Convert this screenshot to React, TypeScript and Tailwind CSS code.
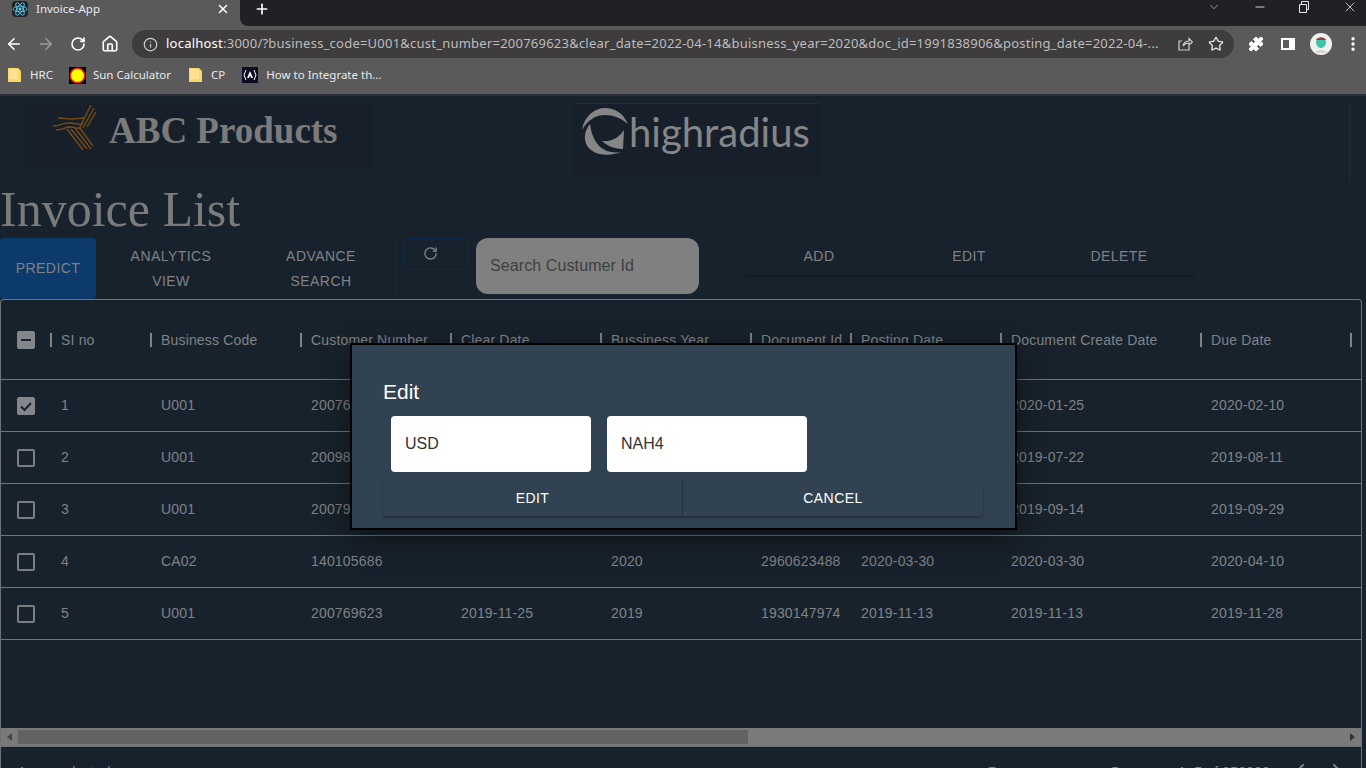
import React from 'react';
import { ArrowLeft, ArrowRight, ChevronDown, ChevronLeft, ChevronRight, Home, Info, Minus, MoreVertical, Plus, Puzzle, RotateCw, Star, X } from 'lucide-react';

const columns = [
  { name: 'SI no', width: 'w-[100px]' },
  { name: 'Business Code', width: 'w-[150px]' },
  { name: 'Customer Number', width: 'w-[150px]' },
  { name: 'Clear Date', width: 'w-[150px]' },
  { name: 'Bussiness Year', width: 'w-[150px]' },
  { name: 'Document Id', width: 'w-[100px]' },
  { name: 'Posting Date', width: 'w-[150px]' },
  { name: 'Document Create Date', width: 'w-[200px]' },
  { name: 'Due Date', width: 'w-[150px]' }
];

// cells behind the dialog only keep what shows in the picture
const rows = [
  { checked: true, cells: ['1', 'U001', '20076', '', '', '', '', '2020-01-25', '2020-02-10'] },
  { checked: false, cells: ['2', 'U001', '20098', '', '', '', '', '2019-07-22', '2019-08-11'] },
  { checked: false, cells: ['3', 'U001', '20079', '', '', '', '', '2019-09-14', '2019-09-29'] },
  { checked: false, cells: ['4', 'CA02', '140105686', '', '2020', '2960623488', '2020-03-30', '2020-03-30', '2020-04-10'] },
  { checked: false, cells: ['5', 'U001', '200769623', '2019-11-25', '2019', '1930147974', '2019-11-13', '2019-11-13', '2019-11-28'] }
];

const FolderIcon = () => (
  <svg width="13" height="16" viewBox="0 0 13 16" className="shrink-0">
    <path d="M0 1h10l3 3v11H0z" fill="#fdd663" />
    <path d="M1 2h9v10H1z" fill="#fde293" />
  </svg>
);

const Browser = () => (
  <div className="shrink-0 bg-[#5a5a5a] font-['Noto_Sans',sans-serif] text-white">
    <div className="flex h-[26px] bg-[#5a5a5a]">
      <div className="flex h-[18px] w-[240px] shrink-0 items-center pl-[12px]">
        <svg width="16" height="16" viewBox="0 0 16 16" className="shrink-0 rounded-sm bg-[#20232a]">
          <g fill="none" stroke="#61dafb" strokeWidth="0.8">
            <ellipse cx="8" cy="8" rx="7" ry="2.8" />
            <ellipse cx="8" cy="8" rx="7" ry="2.8" transform="rotate(60 8 8)" />
            <ellipse cx="8" cy="8" rx="7" ry="2.8" transform="rotate(120 8 8)" />
          </g>
          <circle cx="8" cy="8" r="1.4" fill="#61dafb" />
        </svg>
        <span className="ml-[8px] text-[11.5px] text-[#e8eaed]">Invoice-App</span>
        <X className="ml-auto mr-[10px] h-[14px] w-[14px] text-white" strokeWidth={2.5} />
      </div>
      <div className="flex flex-1 items-start rounded-bl-lg bg-[#202124]">
        <Plus className="ml-[14px] mt-[1px] h-[16px] w-[16px]" strokeWidth={2.5} />
        <div className="ml-auto flex h-[13px] items-center text-[#e8eaed]">
          <ChevronDown className="mr-[32px] h-[14px] w-[14px]" strokeWidth={1} />
          <Minus className="mr-[31px] h-[14px] w-[14px]" strokeWidth={1.5} />
          <svg width="12" height="12" viewBox="0 0 12 12" className="mr-[32px]" fill="none" stroke="currentColor">
            <path d="M1.5 3.5h7v8h-7zM3.5 3.5v-3h7v8h-2" />
          </svg>
          <X className="mr-[8px] h-[16px] w-[16px]" strokeWidth={1.2} />
        </div>
      </div>
    </div>
    <div className="flex h-[36px] items-center">
      <ArrowLeft className="ml-[5px] h-[18px] w-[18px]" strokeWidth={2.2} />
      <ArrowRight className="ml-[14px] h-[18px] w-[18px] text-[#9a9a9a]" strokeWidth={2.2} />
      <RotateCw className="ml-[15px] h-[16px] w-[16px]" strokeWidth={2.4} />
      <Home className="ml-[15px] h-[18px] w-[18px]" strokeWidth={2.2} />
      <div className="ml-[13px] flex h-[28px] w-[1102px] items-center rounded-full bg-[#3e3c3d] pl-[11px]">
        <Info className="h-[15px] w-[15px] text-[#d0d0d0]" strokeWidth={2} />
        <span className="ml-[8px] whitespace-nowrap text-[13px] tracking-[0.23px] text-[#bdbdbd]">
          <span className="text-white">localhost</span>:3000/?business_code=U001&amp;cust_number=200769623&amp;clear_date=2022-04-14&amp;buisness_year=2020&amp;doc_id=1991838906&amp;posting_date=2022-04-...
        </span>
        <svg width="16" height="16" viewBox="0 0 16 16" className="ml-auto mr-[15px] text-[#d0d0d0]" fill="none" stroke="currentColor" strokeWidth="1.2">
          <path d="M12 9.5V14H2V5h3M6 10c.5-3 3-5 6-5V2.5L15.5 6 12 9V7c-2.5 0-4.5 1-6 3z" />
        </svg>
        <Star className="mr-[10px] h-[16px] w-[16px] text-[#e0e0e0]" strokeWidth={2} />
      </div>
      <Puzzle className="ml-[14px] h-[16px] w-[16px] fill-white" strokeWidth={1.5} />
      <svg width="14" height="14" viewBox="0 0 14 14" className="ml-[17px]">
        <path d="M0 1h14v12H0z" fill="#fff" />
        <path d="M2 3h6v8H2z" fill="#5a5a5a" />
      </svg>
      <svg width="22" height="22" viewBox="0 0 22 22" className="ml-[15px]">
        <circle cx="11" cy="11" r="11" fill="#f1f1ef" />
        <path d="M6 9c0-3 2.5-5 5-5s5 2 5 5-2 6-5 6-5-3-5-6z" fill="#3ec5a8" />
        <path d="M6 7c1-3 9-3 10 0z" fill="#a8323c" />
        <path d="M5 20c1-4 11-4 12 0z" fill="#d9d4cf" />
      </svg>
      <MoreVertical className="ml-[12px] h-[18px] w-[18px]" strokeWidth={2.5} />
    </div>
    <div className="flex h-[34px] items-center border-b-2 border-[#2c3137] pb-[6px] text-[11.5px] text-[#e8eaed]">
      <div className="ml-[8px] flex items-center gap-[9px]">
        <FolderIcon />
        <span>HRC</span>
      </div>
      <div className="ml-[16px] flex items-center gap-[7px]">
        <svg width="17" height="17" viewBox="0 0 17 17" className="shrink-0">
          <rect width="17" height="17" fill="#000" />
          <circle cx="8.5" cy="8.5" r="8" fill="#e02020" />
          <circle cx="8.5" cy="8.5" r="6.5" fill="#ffff00" />
        </svg>
        <span>Sun Calculator</span>
      </div>
      <div className="ml-[18px] flex items-center gap-[9px]">
        <FolderIcon />
        <span>CP</span>
      </div>
      <div className="ml-[17px] flex items-center gap-[8px]">
        <svg width="16" height="16" viewBox="0 0 16 16" className="shrink-0">
          <rect width="16" height="16" fill="#0a0a23" />
          <path d="M4 3L2 8l2 5M12 3l2 5-2 5" fill="none" stroke="#fff" strokeWidth="1" />
          <path d="M8 4l3 7H9L8 8l-1 3H5z" fill="#fff" />
        </svg>
        <span>How to Integrate th...</span>
      </div>
    </div>
  </div>
);

const Logos = () => (
  <div className="flex h-[84px] shrink-0 pt-[7px]">
    <div className="ml-[24px] flex h-[67px] w-[349px] items-center bg-[#17202a] pb-[12px]">
      <svg width="44" height="46" viewBox="0 0 44 46" className="ml-[29px] -mt-[5px] shrink-0" fill="none" stroke="#7b4c12" strokeWidth="1.3">
        <path d="M0 21c8 0 8-3 16-3s8 2 14 1M3 25c8 0 8-3 14-3s6 2 11 1M5 13c8 0 8 1 14 1s8-1 13-1" />
        <path d="M14 24l16 21M18 24l16 20M22 23l16 21M26 22l14 19" />
        <path d="M26 24L38 0M30 23L41 3M34 22L43 7" />
      </svg>
      <span className="ml-[12px] whitespace-nowrap font-['Liberation_Serif',serif] text-[37px] font-bold text-[#7b7b7b]">ABC Products</span>
    </div>
    <div className="ml-[200px] flex h-[73px] w-[247px] items-center border-t border-[#222c36] bg-[#17202a] pl-[8px] pb-[16px]">
      <svg width="48" height="48" viewBox="0 0 48 48" className="shrink-0" fill="#868686">
        <path d="M1 22C3 8 14 0 24 0c10 0 18 5 23 16-7-6-15-9-23-9C14 7 6 13 1 22z" />
        <path d="M9 16C2 24 2 36 10 42c8 6 20 6 30 2-10 2-20-2-25-10-4-6-5-12-6-18z" />
        <path d="M43 22l-1 19c-8 0-16-3-21-8 9 1 17-3 22-11z" />
      </svg>
      <span className="whitespace-nowrap font-['Lato',sans-serif] text-[40px] leading-none text-[#868686]">highradius</span>
    </div>
    <div className="ml-auto mr-[16px] h-[80px] border-r border-[#202a34]" />
  </div>
);

const Toolbar = () => (
  <div className="flex h-[61px] shrink-0 items-start text-[14px] tracking-[0.45px] text-[#7f8286]">
    <button className="flex h-[61px] w-[96px] items-center justify-center rounded-[4px] bg-[#0b3a6b] uppercase">Predict</button>
    <div className="flex h-[61px] w-[150px] items-center justify-center text-center leading-[25px] uppercase">Analytics<br />View</div>
    <div className="flex h-[61px] w-[150px] items-center justify-center text-center leading-[25px] uppercase">Advance<br />Search</div>
    <div className="h-[58px] border-l border-[#1f2a34]" />
    <button className="ml-[7px] mr-[8px] flex h-[32px] w-[64px] items-center justify-center rounded-[4px] border border-[#0d2c4b] pb-[2px] pr-[12px]">
      <RotateCw className="h-[15px] w-[15px] text-[#85888b]" strokeWidth={2} />
    </button>
    <div className="flex h-[56px] w-[223px] items-center rounded-xl bg-[#808080] pl-[14px] text-[16px] tracking-[0.1px] text-[#3f3f3f]">Search Custumer Id</div>
    <div className="ml-[45px] flex h-[37px] w-[450px] items-center rounded-[4px] shadow-[0_2px_2px_rgba(0,0,0,0.25)]">
      <div className="w-[150px] text-center uppercase">Add</div>
      <div className="w-[150px] text-center uppercase">Edit</div>
      <div className="w-[150px] text-center uppercase">Delete</div>
    </div>
  </div>
);

const Checkbox = ({ state }: { state: 'on' | 'off' | 'some' }) => {
  if (state === 'off') {
    return <span className="block h-[18px] w-[18px] rounded-[2px] border-2 border-[#7b7f83]" />;
  }
  return (
    <span className="flex h-[18px] w-[18px] items-center justify-center rounded-[2px] bg-[#84878a]">
      {state === 'on' ? (
        <svg width="14" height="14" viewBox="0 0 14 14" fill="none" stroke="#1a232c" strokeWidth="2">
          <path d="M2 7.5l3.5 3.5L12 4" />
        </svg>
      ) : (
        <span className="block h-[2px] w-[10px] bg-[#1a232c]" />
      )}
    </span>
  );
};

const Table = () => (
  <div className="mr-[4px] flex min-h-0 flex-1 flex-col overflow-hidden rounded-t-[4px] border border-b-0 border-[#6f7377] text-[14px] tracking-[0.17px] text-[#7f8286]">
    <div className="flex h-[80px] shrink-0 border-b border-[#6f7377]">
      <div className="flex w-[49px] shrink-0 items-center pl-[16px]">
        <Checkbox state="some" />
      </div>
      {columns.map((col) => (
        <div key={col.name} className={`${col.width} flex shrink-0 items-center`}>
          <span className="h-[14px] w-[2px] shrink-0 bg-[#7f8286]" />
          <span className="ml-[9px] whitespace-nowrap pt-[1px]">{col.name}</span>
        </div>
      ))}
      <div className="flex items-center">
        <span className="h-[14px] w-[2px] bg-[#7f8286]" />
      </div>
    </div>
    {rows.map((row) => (
      <div key={row.cells[0]} className="flex h-[52px] shrink-0 border-b border-[#6f7377]">
        <div className="flex w-[50px] shrink-0 items-center pl-[16px]">
          <Checkbox state={row.checked ? 'on' : 'off'} />
        </div>
        {row.cells.map((cell, i) => (
          <div key={i} className={`${columns[i].width} flex shrink-0 items-center whitespace-nowrap pl-[10px]`}>{cell}</div>
        ))}
      </div>
    ))}
    <div className="flex-1" />
    <div className="flex h-[18px] shrink-0 items-center bg-[#7a7a7a] py-[2px]">
      <div className="flex h-full w-[17px] shrink-0 items-center justify-center">
        <span className="h-0 w-0 border-y-[4px] border-r-[5px] border-y-transparent border-r-[#444]" />
      </div>
      <div className="h-full w-[730px] bg-[#636363]" />
      <div className="ml-auto flex h-full w-[17px] items-center justify-center">
        <span className="h-0 w-0 border-y-[4px] border-l-[5px] border-y-transparent border-l-[#333]" />
      </div>
    </div>
    <div className="flex h-[22px] shrink-0 border-t border-[#6f7377] pl-[17px] pt-[15px] text-[#7f8286]">
      <span className="whitespace-nowrap">1 row selected</span>
      <div className="ml-auto flex items-start whitespace-nowrap pr-[12px]">
        <span>Rows per page:</span>
        <span className="ml-[23px]">5</span>
        <span className="ml-[59px]">1–5 of 950000</span>
        <ChevronLeft className="-mt-[3px] ml-[18px] h-[24px] w-[24px]" />
        <ChevronRight className="-mt-[3px] ml-[13px] h-[24px] w-[24px]" />
      </div>
    </div>
  </div>
);

const EditDialog = () => (
  <div className="absolute left-[350px] top-[343px] w-[667px] border-2 border-black bg-[#314352] px-[31px] pb-[12px] pt-[31px] font-['Liberation_Sans',sans-serif] shadow-[0_10px_30px_rgba(0,0,0,0.45)]">
    <h2 className="text-[21px] leading-[32px] text-white">Edit</h2>
    <div className="ml-[8px] mt-[8px] flex gap-[16px]">
      <div className="flex h-[56px] w-[200px] items-center rounded-[4px] bg-white pl-[14px] text-[16px] text-[#333]">USD</div>
      <div className="flex h-[56px] w-[200px] items-center rounded-[4px] bg-white pl-[14px] text-[16px] text-[#333]">NAH4</div>
    </div>
    <div className="mt-[8px] flex h-[36px] w-[600px] rounded-[4px] text-[14px] tracking-[0.45px] text-white shadow-[0_2px_3px_rgba(0,0,0,0.3)]">
      <button className="w-[300px] border-r border-[#233240] uppercase">Edit</button>
      <button className="w-[300px] uppercase">Cancel</button>
    </div>
  </div>
);

const App = () => {
  return (
    <div className="relative flex h-screen flex-col overflow-hidden bg-[#18222c] font-['Liberation_Sans',sans-serif]">
      <Browser />
      <Logos />
      <h1 className="h-[58px] shrink-0 font-['Liberation_Serif',serif] text-[50px] leading-[58px] text-[#7b7b7b]">Invoice List</h1>
      <Toolbar />
      <Table />
      <EditDialog />
    </div>
  );
};

export default App;
